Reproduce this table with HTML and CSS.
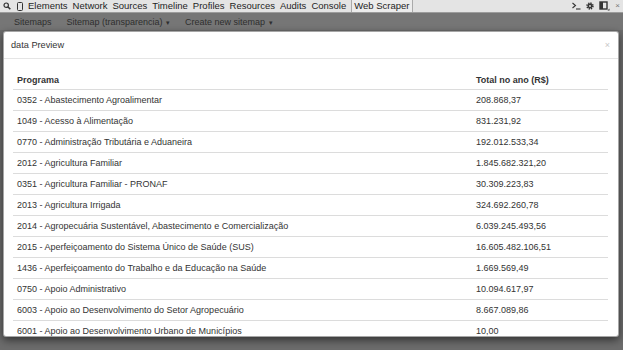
FILE: index.html
```html
<!DOCTYPE html>
<html>
<head>
<meta charset="utf-8">
<link rel="stylesheet" href="styles.css">
</head>
<body>
<div class="devbar">
  <div class="devbar-left">
    <svg class="ico" width="8" height="8" viewBox="0 0 8 8"><circle cx="3.2" cy="3.2" r="2.2" fill="none" stroke="#333" stroke-width="1.2"/><path d="M4.8 4.8 L7.3 7.3" stroke="#333" stroke-width="1.6"/></svg>
    <svg class="ico dev" width="6" height="9" viewBox="0 0 6 9"><rect x="0.5" y="0.5" width="5" height="8" rx="1" fill="none" stroke="#333" stroke-width="1"/></svg>
    <nav class="tabs">
      <span>Elements</span><span>Network</span><span>Sources</span><span>Timeline</span><span>Profiles</span><span>Resources</span><span>Audits</span><span>Console</span><span class="active">Web Scraper</span>
    </nav>
  </div>
  <div class="devbar-right">
    <svg width="9" height="8" viewBox="0 0 9 8"><path d="M0.5 1 L3.5 3.5 L0.5 6" fill="none" stroke="#333" stroke-width="1.1"/><path d="M4 7 H8.5" stroke="#333" stroke-width="1.1"/></svg>
    <svg width="8" height="8" viewBox="0 0 8 8"><circle cx="4" cy="4" r="2.9" fill="none" stroke="#333" stroke-width="1.6" stroke-dasharray="1.3 0.98"/><circle cx="4" cy="4" r="2.4" fill="#333"/><circle cx="4" cy="4" r="0.9" fill="#e6e6e6"/></svg>
    <svg width="11" height="10" viewBox="0 0 11 10"><rect x="1" y="1" width="7" height="7" fill="none" stroke="#333" stroke-width="1.4"/><rect x="1" y="1" width="3" height="7" fill="#333"/><path d="M8.5 9.5 L10.5 9.5 L10.5 7.5 Z" fill="#333"/></svg>
    <span class="close-dev">×</span>
  </div>
</div>
<div class="subnav">
  <span class="item">Sitemaps</span>
  <span class="item">Sitemap (transparencia) <span class="caret">▾</span></span>
  <span class="item">Create new sitemap <span class="caret">▾</span></span>
</div>
<div class="stage">
  <div class="modal">
    <div class="modal-header">
      <span class="title">data Preview</span>
      <span class="close">×</span>
    </div>
    <div class="modal-body">
      <table class="data">
        <colgroup><col class="c1"><col class="c2"></colgroup>
        <thead>
          <tr><th>Programa</th><th>Total no ano (R$)</th></tr>
        </thead>
        <tbody>
          <tr><td>0352 - Abastecimento Agroalimentar</td><td>208.868,37</td></tr>
          <tr><td>1049 - Acesso à Alimentação</td><td>831.231,92</td></tr>
          <tr><td>0770 - Administração Tributária e Aduaneira</td><td>192.012.533,34</td></tr>
          <tr><td>2012 - Agricultura Familiar</td><td>1.845.682.321,20</td></tr>
          <tr><td>0351 - Agricultura Familiar - PRONAF</td><td>30.309.223,83</td></tr>
          <tr><td>2013 - Agricultura Irrigada</td><td>324.692.260,78</td></tr>
          <tr><td>2014 - Agropecuária Sustentável, Abastecimento e Comercialização</td><td>6.039.245.493,56</td></tr>
          <tr><td>2015 - Aperfeiçoamento do Sistema Único de Saúde (SUS)</td><td>16.605.482.106,51</td></tr>
          <tr><td>1436 - Aperfeiçoamento do Trabalho e da Educação na Saúde</td><td>1.669.569,49</td></tr>
          <tr><td>0750 - Apoio Administrativo</td><td>10.094.617,97</td></tr>
          <tr><td>6003 - Apoio ao Desenvolvimento do Setor Agropecuário</td><td>8.667.089,86</td></tr>
          <tr><td>6001 - Apoio ao Desenvolvimento Urbano de Municípios</td><td>10,00</td></tr>
        </tbody>
      </table>
    </div>
  </div>
</div>
</body>
</html>
```
FILE: styles.css
```css
html, body {
  margin: 0;
  padding: 0;
}
body {
  width: 623px;
  height: 350px;
  overflow: hidden;
  background: #6c6c6c;
  font-family: "Liberation Sans", Arial, sans-serif;
  color: #333;
}
.devbar {
  height: 12px;
  background: #e4e4e4;
  border-bottom: 1px solid #9c9c9c;
  display: flex;
  align-items: center;
  justify-content: space-between;
  font-size: 9.5px;
  color: #1e1e1e;
}
.devbar-left {
  display: flex;
  align-items: center;
  padding-left: 3px;
}
.ico { display: block; }
.ico.dev { margin-left: 6px; }
.tabs {
  display: flex;
  gap: 5px;
  margin-left: 5px;
  line-height: 12px;
}
.tabs .active {
  border-left: 1px solid #aaa;
  border-right: 1px solid #aaa;
  padding: 0 2px;
  background: #ececec;
}
.devbar-right {
  display: flex;
  align-items: center;
  gap: 5px;
  padding-right: 3px;
}
.close-dev {
  font-size: 8px;
  color: #777;
  line-height: 8px;
}
.subnav {
  height: 17px;
  background: #767676;
  display: flex;
  align-items: center;
  padding-left: 14px;
  gap: 15px;
  font-size: 9px;
  color: #2e2e2e;
}
.caret {
  font-size: 7px;
  margin-left: 1px;
}
.stage {
  padding: 1px 4px 0 3px;
}
.modal {
  height: 304px;
  background: #fff;
  border: 1px solid rgba(0,0,0,0.35);
  border-radius: 3px;
  box-shadow: 0 3px 8px rgba(0,0,0,0.55);
  overflow: hidden;
}
.modal-header {
  height: 26px;
  border-bottom: 1px solid #e5e5e5;
  display: flex;
  align-items: center;
  justify-content: space-between;
  padding: 0 8px 0 7px;
}
.title {
  font-size: 9.2px;
  color: #333;
}
.close {
  font-size: 9px;
  color: #c8c8c8;
  margin-top: -1px;
}
.modal-body {
  padding: 11px 10px 0 9px;
}
.data {
  width: 100%;
  border-collapse: collapse;
  table-layout: fixed;
  font-size: 9px;
}
.c1 { width: 459px; }
.data th {
  text-align: left;
  font-weight: bold;
  height: 19px;
  padding: 0 4px;
  border-bottom: 1px solid #dcdcdc;
  vertical-align: middle;
}
.data td {
  height: 20px;
  padding: 0 4px;
  border-top: 1px solid #dcdcdc;
  vertical-align: middle;
  white-space: nowrap;
}
.data thead + tbody tr:first-child td {
  border-top: 1px solid #dcdcdc;
}
```
